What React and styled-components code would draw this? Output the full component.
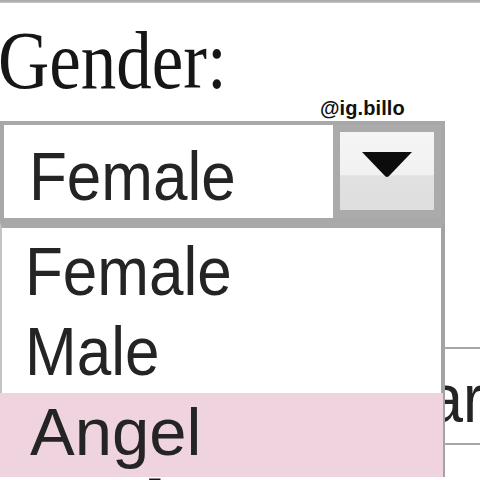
import React from "react";
import styled, { createGlobalStyle } from "styled-components";

const Global = createGlobalStyle`
  html, body { margin: 0; padding: 0; background: #fff; }
  body { width: 480px; height: 480px; overflow: hidden; }
`;

const Page = styled.div`
  position: relative;
  width: 480px;
  height: 480px;
  overflow: hidden;
  background: #fff;
  display: flex;
  flex-direction: column;
`;

const TopRule = styled.div`
  flex: none;
  height: 3px;
  background: linear-gradient(#a4a4a4, #c6c6c6);
`;

const FieldLabel = styled.div`
  flex: none;
  margin-top: ${(p) => p.$gap}px;
  margin-left: -2px;
  height: 71px;
  font-family: "Liberation Serif", "Times New Roman", serif;
  font-size: 71px;
  line-height: 1;
  color: #161616;
  transform: scaleY(1.17);
  transform-origin: 0 83.75%;
  white-space: nowrap;
`;

const Handle = styled.div`
  position: absolute;
  left: 320px;
  top: 98px;
  font-family: "Liberation Sans", Arial, sans-serif;
  font-weight: 700;
  font-size: 20px;
  line-height: 1;
  letter-spacing: 0.1px;
  color: #111;
  z-index: 3;
`;

const Label = styled.span`
  display: inline-block;
  font-family: "Liberation Sans", Arial, sans-serif;
  font-size: ${(p) => p.$size}px;
  line-height: 1;
  color: #242424;
  white-space: nowrap;
  transform: scaleY(${(p) => p.$stretch});
  transform-origin: 0 84.65%;
`;

const SelectWrap = styled.div`
  position: relative;
  z-index: 2;
  flex: none;
  margin-top: 21.5px;
  width: 445px;
`;

const SelectBox = styled.div`
  box-sizing: border-box;
  display: flex;
  width: 445px;
  height: 101px;
  border: 4px solid #a8a8a8;
  background: #fff;
`;

const Value = styled.div`
  flex: 1;
  box-sizing: border-box;
  padding: 22.5px 0 0 25px;
  overflow: hidden;
`;

const ArrowButton = styled.div`
  flex: none;
  box-sizing: border-box;
  width: 108px;
  height: 93px;
  border: 7px solid #ababab;
  border-bottom-width: 8px;
  background: linear-gradient(#f5f5f5 0%, #f1f1f1 55%, #e1e1e1 56%, #dedede 100%);
  display: flex;
  justify-content: center;
  padding-top: 19px;
`;

const Menu = styled.div`
  position: absolute;
  left: 0;
  top: 100%;
  box-sizing: border-box;
  width: 445px;
  border-top: 6px solid #a9a9a9;
  border-left: 2px solid #c4c4c4;
  border-right: 4px solid #a3a3a3;
  padding-top: 5px;
  background: #fff;
  display: flex;
  flex-direction: column;
`;

const Option = styled.div`
  box-sizing: border-box;
  height: ${(p) => (p.$active ? 84 : 80)}px;
  margin: ${(p) => (p.$active ? "0 -2px 0 -2px" : "0")};
  padding: ${(p) => (p.$active ? "5.3px 0 0 30px" : "9.5px 0 0 23px")};
  background: ${(p) => (p.$active ? "#efd3de" : "transparent")};
  overflow: hidden;
`;

const FieldRow = styled.div`
  flex: none;
  margin-top: 125px;
  display: flex;
`;

const TextBox = styled.div`
  flex: none;
  box-sizing: border-box;
  margin-left: 320px;
  width: 240px;
  height: 98px;
  border: 2px solid #a6a6a6;
  padding: 20.5px 0 0 13.5px;
  background: #fff;
  overflow: hidden;
`;

function Caret() {
  return (
    <svg width="52" height="27" viewBox="0 0 52 27">
      <path d="M1 1 L51 1 L28 25 Q26 27 24 25 Z" fill="#0c0c0c" />
    </svg>
  );
}

export default function App() {
  const options = ["Female", "Male", "Angel"];
  const selected = "Angel";
  return (
    <>
      <Global />
      <Page>
        <TopRule />
        <FieldLabel $gap={25.5}>Gender:</FieldLabel>
        <Handle>@ig.billo</Handle>
        <SelectWrap>
          <SelectBox>
            <Value>
              <Label $size={62} $stretch={1.12}>Female</Label>
            </Value>
            <ArrowButton>
              <Caret />
            </ArrowButton>
          </SelectBox>
          <Menu>
            {options.map((o) => (
              <Option key={o} $active={o === selected}>
                {o === selected ? (
                  <Label $size={67} $stretch={1.0}>{o}</Label>
                ) : (
                  <Label $size={62} $stretch={1.12}>{o}</Label>
                )}
              </Option>
            ))}
          </Menu>
        </SelectWrap>
        <FieldRow>
          <TextBox>
            <Label $size={62} $stretch={1.12}>Clear</Label>
          </TextBox>
        </FieldRow>
        <FieldLabel $gap={32}>Email:</FieldLabel>
      </Page>
    </>
  );
}
